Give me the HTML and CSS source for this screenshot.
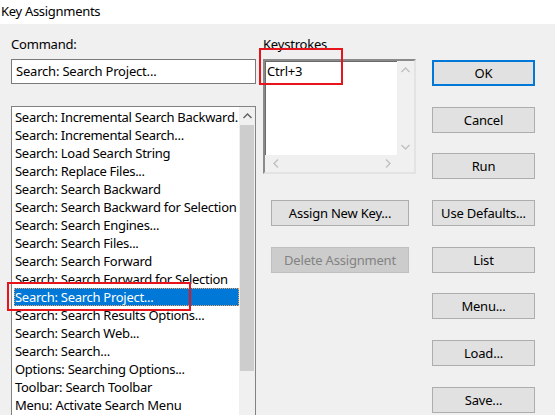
FILE: index.html
```html
<!DOCTYPE html>
<html>
<head>
<meta charset="utf-8">
<link rel="stylesheet" href="styles.css">
</head>
<body>
<div class="titlebar">Key Assignments</div>
<div class="dialog">
  <div class="col-left">
    <div class="lbl">Command:</div>
    <div class="input">Search: Search Project...</div>
    <div class="listbox">
      <ul class="items">
        <li>Search: Incremental Search Backward.</li>
        <li>Search: Incremental Search...</li>
        <li>Search: Load Search String</li>
        <li>Search: Replace Files...</li>
        <li>Search: Search Backward</li>
        <li>Search: Search Backward for Selection</li>
        <li>Search: Search Engines...</li>
        <li>Search: Search Files...</li>
        <li>Search: Search Forward</li>
        <li>Search: Search Forward for Selection</li>
        <li class="sel">Search: Search Project...</li>
        <li>Search: Search Results Options...</li>
        <li>Search: Search Web...</li>
        <li>Search: Search...</li>
        <li>Options: Searching Options...</li>
        <li>Toolbar: Search Toolbar</li>
        <li>Menu: Activate Search Menu</li>
      </ul>
      <div class="vscroll">
        <div class="arrow"><svg width="9" height="6" viewBox="0 0 9 6"><polyline points="0.5,5 4.5,1 8.5,5" fill="none" stroke="#606060" stroke-width="1.4"/></svg></div>
        <div class="thumb"></div>
      </div>
    </div>
  </div>
  <div class="col-mid">
    <div class="lbl">Keystrokes</div>
    <div class="keybox">
      <div class="keycontent">Ctrl+3</div>
      <div class="kv">
        <svg width="9" height="6" viewBox="0 0 9 6"><polyline points="0.5,5 4.5,1 8.5,5" fill="none" stroke="#c0c0c0" stroke-width="1.4"/></svg>
        <svg width="9" height="6" viewBox="0 0 9 6"><polyline points="0.5,1 4.5,5 8.5,1" fill="none" stroke="#c0c0c0" stroke-width="1.4"/></svg>
      </div>
      <div class="kh">
        <svg width="6" height="9" viewBox="0 0 6 9"><polyline points="5,0.5 1,4.5 5,8.5" fill="none" stroke="#c0c0c0" stroke-width="1.4"/></svg>
        <svg width="6" height="9" viewBox="0 0 6 9"><polyline points="1,0.5 5,4.5 1,8.5" fill="none" stroke="#c0c0c0" stroke-width="1.4"/></svg>
      </div>
      <div class="corner"></div>
    </div>
    <button class="btn wide assign">Assign New Key...</button>
    <button class="btn wide disabled">Delete Assignment</button>
  </div>
  <div class="col-right">
    <button class="btn default">OK</button>
    <button class="btn">Cancel</button>
    <button class="btn">Run</button>
    <button class="btn">Use Defaults...</button>
    <button class="btn">List</button>
    <button class="btn">Menu...</button>
    <button class="btn">Load...</button>
    <button class="btn">Save...</button>
  </div>
  <div class="mark mark-key"></div>
  <div class="mark mark-sel"></div>
</div>
</body>
</html>
```
FILE: styles.css
```css
html, body {
  margin: 0;
  padding: 0;
  height: 415px;
  overflow: hidden;
  background: #f0f0f0;
  font-family: "Noto Sans", "Open Sans", sans-serif;
  font-size: 13px;
  letter-spacing: -0.2px;
  color: #000;
}
.titlebar {
  height: 24px;
  line-height: 22px;
  background: #fff;
  padding-left: 1px;
  font-size: 13px;
  letter-spacing: -0.3px;
}
.dialog {
  position: relative;
  display: flex;
  align-items: flex-start;
  padding-top: 10px;
}
.lbl {
  height: 20px;
  line-height: 20px;
  white-space: nowrap;
}
.col-left {
  margin-left: 11px;
  width: 245px;
  display: flex;
  flex-direction: column;
}
.input {
  margin-top: 5px;
  height: 25px;
  box-sizing: border-box;
  border: 1px solid #7a7a7a;
  background: #fff;
  padding-left: 4px;
  line-height: 22px;
  white-space: nowrap;
}
.listbox {
  margin-top: 22px;
  height: 320px;
  box-sizing: border-box;
  border: 1px solid #828282;
  background: #fff;
  display: flex;
}
.items {
  list-style: none;
  margin: 0;
  padding: 1px 0 0 2px;
  flex: 1;
  overflow: hidden;
  letter-spacing: -0.28px;
}
.items li {
  height: 18px;
  line-height: 18px;
  padding-left: 1px;
  white-space: nowrap;
  overflow: hidden;
  box-sizing: border-box;
}
.items li.sel {
  background: #0078d7;
  color: #fff;
  border: 1px dotted #f4a460;
  padding-left: 0;
  line-height: 16px;
}
.vscroll {
  width: 16px;
  background: #f0f0f0;
  display: flex;
  flex-direction: column;
  align-items: center;
}
.vscroll .arrow {
  height: 18px;
  display: flex;
  align-items: center;
  justify-content: center;
}
.vscroll .thumb {
  width: 14px;
  height: 246px;
  background: #cdcdcd;
}
.col-mid {
  margin-left: 7px;
  width: 153px;
  display: flex;
  flex-direction: column;
}
.keybox {
  margin-top: 5px;
  height: 115px;
  box-sizing: border-box;
  border-style: solid;
  border-width: 2px;
  border-color: #8a8a8a #e3e3e3 #e3e3e3 #8a8a8a;
  box-shadow: inset 1px 1px 0 #6a6a6a;
  background: #fff;
  display: grid;
  grid-template-columns: 1fr 17px;
  grid-template-rows: 1fr 17px;
}
.keycontent {
  padding: 1px 0 0 2px;
  line-height: 18px;
}
.kv {
  background: #f0f0f0;
  display: flex;
  flex-direction: column;
  justify-content: space-between;
  align-items: center;
  padding: 6px 0 5px;
}
.kh {
  background: #f0f0f0;
  display: flex;
  justify-content: space-between;
  align-items: center;
  padding: 0 6px 0 8px;
}
.corner {
  background: #f0f0f0;
}
.btn {
  font-family: inherit;
  font-size: 13px;
  letter-spacing: -0.2px;
  color: #000;
  height: 26px;
  box-sizing: border-box;
  border: 1px solid #adadad;
  background: #e1e1e1;
  padding: 0;
  margin: 0;
  white-space: nowrap;
}
.btn.default {
  border: 2px solid #0078d7;
}
.btn.wide {
  width: 138px;
  margin-left: 8px;
}
.btn.assign {
  margin-top: 26px;
}
.btn.disabled {
  margin-top: 21px;
  background: #cccccc;
  border-color: #bfbfbf;
  color: #838383;
}
.col-right {
  margin-left: 16px;
  margin-top: 26px;
  width: 103px;
  display: flex;
  flex-direction: column;
  gap: 20.7px;
}
.col-right .btn {
  width: 103px;
}
.mark {
  position: absolute;
  border: 2px solid #e8141c;
  box-sizing: border-box;
}
.mark-key {
  left: 259px;
  top: 24px;
  width: 84px;
  height: 37px;
}
.mark-sel {
  left: 7px;
  top: 258px;
  width: 184px;
  height: 29px;
}
```
